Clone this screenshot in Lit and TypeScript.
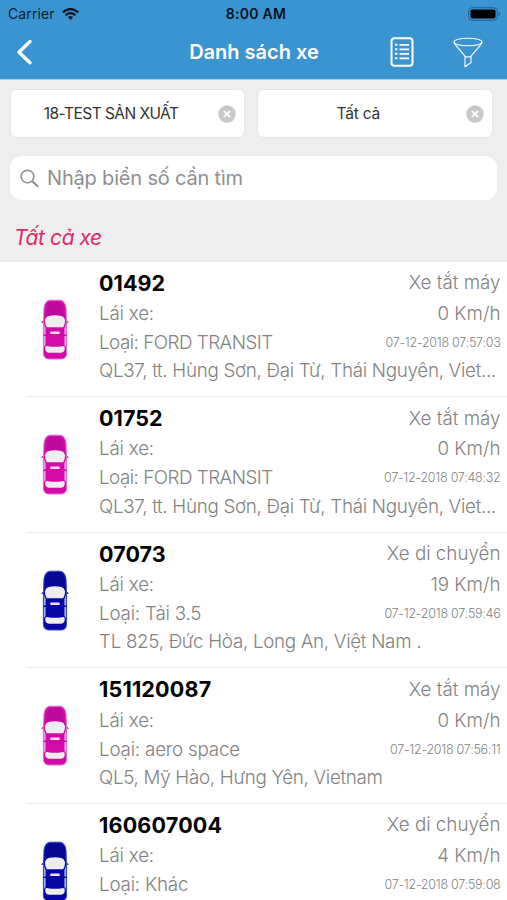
import { LitElement, html, css, svg } from "lit";
import { customElement, property } from "lit/decorators.js";
import { classMap } from "lit/directives/class-map.js";

interface Vehicle {
  plate: string;
  status: string;
  speed: string;
  kind: string;
  time: string;
  address: string;
  color: "pink" | "blue";
}

const VEHICLES: Vehicle[] = [
  { plate: "01492", status: "Xe tắt máy", speed: "0 Km/h", kind: "FORD TRANSIT", time: "07-12-2018 07:57:03", address: "QL37, tt. Hùng Sơn, Đại Từ, Thái Nguyên, Viet...", color: "pink" },
  { plate: "01752", status: "Xe tắt máy", speed: "0 Km/h", kind: "FORD TRANSIT", time: "07-12-2018 07:48:32", address: "QL37, tt. Hùng Sơn, Đại Từ, Thái Nguyên, Viet...", color: "pink" },
  { plate: "07073", status: "Xe di chuyển", speed: "19 Km/h", kind: "Tải 3.5", time: "07-12-2018 07:59:46", address: "TL 825, Đức Hòa, Long An, Việt Nam .", color: "blue" },
  { plate: "151120087", status: "Xe tắt máy", speed: "0 Km/h", kind: "aero space", time: "07-12-2018 07:56:11", address: "QL5, Mỹ Hào, Hưng Yên, Vietnam", color: "pink" },
  { plate: "160607004", status: "Xe di chuyển", speed: "4 Km/h", kind: "Khác", time: "07-12-2018 07:59:08", address: "", color: "blue" },
];

@customElement("car-icon")
class CarIcon extends LitElement {
  @property() color: "pink" | "blue" = "pink";

  static styles = css`
    :host { display: block; width: 28px; height: 61px; }
    svg { display: block; }
    .pink { --body: #d30aa8; --hood: #bd0a9c; --edge: #e070cc; --side: #e6a0e4; }
    .blue { --body: #0606a6; --hood: #070790; --edge: #3a4ca4; --side: #a4b4e6; }
    .body { fill: var(--body); stroke: var(--edge); }
    .hood { fill: var(--hood); }
    .side { fill: var(--side); }
    .glass { fill: #eeecec; }
    .sign { fill: #f7d9f2; }
  `;

  render() {
    return html`<svg class=${this.color} width="28" height="61" viewBox="0 0 28 61">
      <path class="hood" d="M0 23.500l3-2.500v3zM28 23.500l-3-2.500v3z" />
      <path class="body" d="M3 9Q4 1.600 9 1.200h10Q24 1.600 25 9L25.600 26V54Q25.600 59.600 20.500 60H7.500Q2.400 59.600 2.400 54V26Z" />
      <path class="hood" d="M6 9Q7 3.500 10 3h8Q21 3.500 22 9L23 17.500Q14 14 5 17.500Z" />
      <path class="side" d="M3 25L4.600 29V46L3 48ZM25 25L23.400 29V46L25 48Z" />
      <path class="hood" d="M2.500 35.500h2.500v1.500h-2.500zM23 35.500h2.500v1.500h-2.500z" />
      <path class="glass" d="M3.900 21.500Q5 17 9 16.700Q14 16 19 16.700Q23 17 24.100 21.500Q24 26 22.200 28.300H5.800Q4 26 3.900 21.500Z" />
      <path class="glass" d="M4.200 48.500Q4.500 46.800 7 47.200Q14 48.500 21 47.200Q23.500 46.800 23.800 48.500Q24 53.500 20 53.700H8Q4 53.500 4.200 48.500Z" />
      <rect class="sign" x="9.300" y="32.500" width="9.400" height="2.500" rx=".6" />
    </svg>`;
  }
}

@customElement("vehicle-row")
class VehicleRow extends LitElement {
  @property({ attribute: false }) vehicle!: Vehicle;

  static styles = css`
    :host { display: flex; height: 135.6px; flex: none; box-sizing: border-box; color: #828282; font-weight: 300; font-size: 18.8px; letter-spacing: -0.3px; }
    .art { width: 99px; flex: none; padding: 37px 0 0 41px; box-sizing: border-box; }
    .info { flex: 1; min-width: 0; padding: 5px 6.500px 0 0; display: grid; grid-template-columns: auto 1fr; grid-template-rows: 32px 29.500px 28.500px 28.500px; align-items: center; white-space: nowrap; }
    .plate { color: #000; font-weight: 700; font-size: 21.500px; letter-spacing: 0.08px; }
    .plate.long { letter-spacing: 0.2px; }
    .right { text-align: right; letter-spacing: 0; }
    .label { letter-spacing: -0.200px; }
    .label.caps { letter-spacing: -0.500px; }
    .time { font-size: 12.500px; letter-spacing: -0.25px; text-align: right; }
    .address { grid-column: 1 / 3; }
  `;

  render() {
    const v = this.vehicle;
    const caps = v.kind === v.kind.toUpperCase();
    return html`
      <div class="art"><car-icon .color=${v.color}></car-icon></div>
      <div class="info">
        <span class=${classMap({ plate: true, long: v.plate.length > 5 })}>${v.plate}</span><span class="right">${v.status}</span>
        <span class="label">Lái xe:</span><span class="right">${v.speed}</span>
        <span class=${classMap({ label: true, caps })}>Loại: ${v.kind}</span><span class="time">${v.time}</span>
        <span class="address">${v.address}</span>
      </div>`;
  }
}

const clearIcon = svg`<svg class="clear" width="18" height="18" viewBox="0 0 18 18">
  <circle cx="9" cy="9" r="8.700" fill="#c8c8c8" />
  <path d="M5.800 5.800l6.400 6.400M12.200 5.800l-6.400 6.400" stroke="#fff" stroke-width="1.900" />
</svg>`;

@customElement("app-root")
class AppRoot extends LitElement {
  static styles = css`
    :host { display: flex; flex-direction: column; width: 507px; height: 900px; overflow: hidden; background: #fff; font-family: Inter, "Liberation Sans", sans-serif; }
    svg { display: block; flex: none; }
    .top { height: 79px; flex: none; background: #3b94d2; border-bottom: 1px solid #a9cfe9; box-sizing: content-box; }
    .status { display: grid; grid-template-columns: 1fr auto 1fr; align-items: center; height: 27px; padding: 0 6px 0 8px; font-size: 14px; color: #0a1c2a; }
    .carrier { display: flex; align-items: center; gap: 7px; letter-spacing: 0.1px; }
    .clock { font-weight: 600; color: #06121c; letter-spacing: 0.3px; padding-left: 3px; }
    .battery { justify-self: end; }
    .nav { display: grid; grid-template-columns: 1fr auto 1fr; align-items: center; height: 50px; padding: 0 24px 0 16px; }
    .title { color: #fff; font-size: 20px; font-weight: 600; padding-left: 9px; }
    .actions { display: flex; justify-self: end; align-items: center; gap: 39px; }
    .panel { height: 181.500px; flex: none; background: #eee; box-sizing: border-box; padding: 9px 10px 0 10px; border-bottom: 1px solid #e8e8e8; }
    .filters { display: flex; gap: 12px; padding-right: 4.500px; }
    .filter { flex: 1; height: 49px; box-sizing: border-box; border: 1px solid #e6e6e6; border-radius: 6px; background: #fff; display: flex; align-items: center; padding: 0 8px 0 0; font-size: 15.500px; color: #333; letter-spacing: -0.550px; }
    .filter + .filter { letter-spacing: -0.200px; }
    .value { flex: 1; text-align: center; padding: 0 7px 1px 0; }
    .search { display: flex; align-items: center; gap: 8px; height: 44px; margin-top: 18px; padding-left: 10px; border-radius: 12px; background: #fff; color: #8e8e93; font-size: 20px; letter-spacing: -0.180px; }
    .heading { padding: 26px 0 0 4px; color: #e0296c; font-style: italic; font-size: 21px; line-height: 24px; letter-spacing: -0.450px; }
    .list { flex: 1; min-height: 0; overflow: hidden; display: flex; flex-direction: column; }
    .item { flex: none; height: 135.600px; background: linear-gradient(#ebebeb, #ebebeb) 26px 100% / 100% 1px no-repeat; }
  `;

  render() {
    return html`
      <div class="top">
        <div class="status">
          <div class="carrier">Carrier
            <svg width="17" height="12" viewBox="0 0 17 12" fill="none" stroke="#081620" stroke-width="2.200">
              <path d="M.8 4.300Q8.500-2.300 16.200 4.300M3.600 7.200Q8.500 3 13.400 7.200" />
              <path d="M5.900 9.100Q8.500 7 11.100 9.100L8.500 11.900Z" fill="#081620" stroke="none" />
            </svg>
          </div>
          <span class="clock">8:00 AM</span>
          <svg class="battery" width="33" height="14" viewBox="0 0 33 14">
            <rect x=".7" y=".7" width="28.600" height="12.600" rx="3.500" fill="none" stroke="#20618f" />
            <rect x="2.500" y="2.500" width="25" height="9" rx="1.800" fill="#000" />
            <path d="M30.700 4.500q2.600 2.500 0 5z" fill="#20618f" />
          </svg>
        </div>
        <div class="nav">
          <svg width="17" height="28" viewBox="0 0 17 28" fill="none" stroke="#fff" stroke-width="3.400" stroke-linecap="round" stroke-linejoin="round"><path d="M14 3.500L3 14.200 14 24.700" /></svg>
          <span class="title">Danh sách xe</span>
          <div class="actions">
            <svg width="24" height="30" viewBox="0 0 24 30" fill="none" stroke="#fff">
              <rect x="1.500" y="1.300" width="21" height="27.400" rx="2.800" stroke-width="2" />
              <path d="M9.500 7.800h9.500M9.500 12.300h9.500M9.500 16.800h9.500M9.500 21.300h9.500" stroke-width="1.800" />
              <path d="M5 7.800h2.400M5 12.300h2.400M5 16.800h2.400M5 21.300h2.400" stroke-width="2" />
            </svg>
            <svg width="30" height="31" viewBox="0 0 30 31" fill="none" stroke="#fff" stroke-width="1.100" stroke-linejoin="round">
              <ellipse cx="15" cy="5" rx="14" ry="3.800" />
              <path d="M1 5Q1.300 7 3 8.700L12 19.200V29.800L18 25.500V19.200L27 8.700Q28.700 7 29 5M12 19.200Q15 20.800 18 19.200" />
            </svg>
          </div>
        </div>
      </div>
      <div class="panel">
        <div class="filters">
          <div class="filter"><span class="value">18-TEST SẢN XUẤT</span>${clearIcon}</div>
          <div class="filter"><span class="value">Tất cả</span>${clearIcon}</div>
        </div>
        <div class="search">
          <svg width="19" height="19" viewBox="0 0 19 19" fill="none" stroke="#8e8e93" stroke-width="1.600"><circle cx="7.500" cy="7.500" r="6.300" /><path d="M12 12l6 5.800" stroke-width="2" /></svg>
          <span>Nhập biển số cần tìm</span>
        </div>
        <div class="heading">Tất cả xe</div>
      </div>
      <div class="list">
        ${VEHICLES.map((v) => html`<div class="item"><vehicle-row .vehicle=${v}></vehicle-row></div>`)}
      </div>`;
  }
}
